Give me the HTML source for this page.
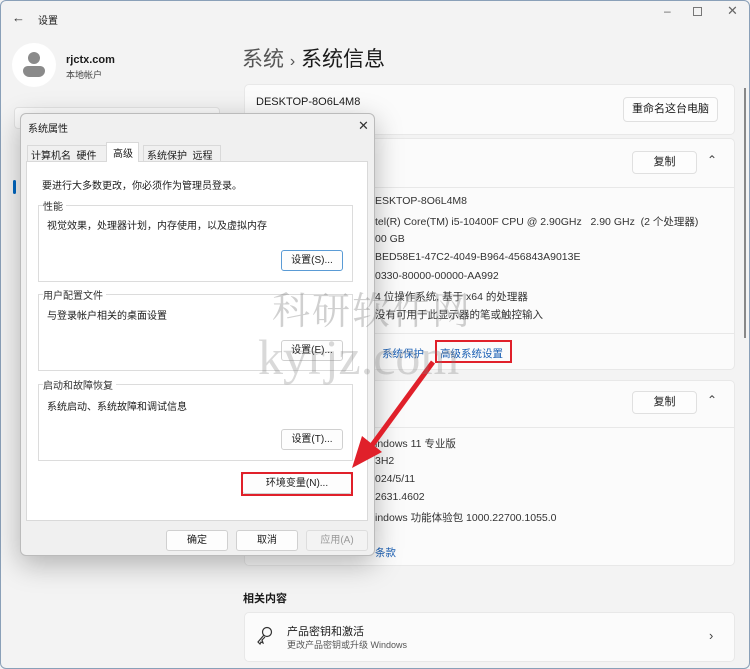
<!DOCTYPE html><html><head><meta charset="utf-8"><style>
*{margin:0;padding:0;box-sizing:border-box}
body{width:750px;height:669px;overflow:hidden;background:#f3f3f3;font-family:"Liberation Sans","Noto Sans CJK SC",sans-serif;color:#1b1b1b;position:relative;font-size:11px}
.a{position:absolute;white-space:nowrap}
.card{position:absolute;background:#fbfbfb;border:1px solid #e8e8e8;border-radius:5px}
.btn{position:absolute;background:#fdfdfd;border:1px solid #e0e0e0;border-radius:4px;text-align:center;font-size:11px}
.row{position:absolute;left:375px;font-size:10.5px;color:#333}
.dbtn{position:absolute;background:#fdfdfd;border:1px solid #d0d0d0;border-radius:3px;text-align:center;font-size:10px;line-height:19px}
.gb{position:absolute;border:1px solid #dcdcdc;left:38px;width:315px;height:77px}
.gl{position:absolute;background:#fff;font-size:10px;color:#333;padding-right:3px}
</style></head><body>
<div style="position:absolute;inset:0;border:1px solid #8aa0b8;border-radius:6px"></div>
<div class="a" style="left:12px;top:10px;font-size:13px;color:#333">←</div>
<div class="a" style="left:38px;top:12px;font-size:10px">设置</div>
<div class="a" style="left:664px;top:4px;font-size:12px;color:#666">–</div>
<div class="a" style="left:693px;top:7px;width:9px;height:9px;border:1px solid #777"></div>
<div class="a" style="left:727px;top:3px;font-size:13px;color:#666">✕</div>
<div class="a" style="left:12px;top:43px;width:44px;height:44px;border-radius:50%;background:#fff"></div>
<div class="a" style="left:28px;top:52px;width:12px;height:12px;border-radius:50%;background:#8a8a8a"></div>
<div class="a" style="left:23px;top:66px;width:22px;height:11px;border-radius:6px 6px 8px 8px;background:#8a8a8a"></div>
<div class="a" style="left:66px;top:54px;font-size:11px;font-weight:bold">rjctx.com</div>
<div class="a" style="left:66px;top:68px;font-size:9px;color:#444">本地帐户</div>
<div class="a" style="left:14px;top:107px;width:206px;height:22px;background:#fbfbfb;border:1px solid #e3e3e3;border-radius:4px"></div>
<div class="a" style="left:13px;top:180px;width:3px;height:14px;background:#0067c0;border-radius:2px"></div>
<div class="a" style="left:242px;top:43px;font-size:21px;color:#555">系统 <span style="font-size:16px">›</span> <span style="color:#1b1b1b">系统信息</span></div>
<div class="card" style="left:244px;top:84px;width:491px;height:51px"></div>
<div class="a" style="left:256px;top:96px;font-size:11px">DESKTOP-8O6L4M8</div>
<div class="btn" style="left:623px;top:97px;width:95px;height:25px;line-height:23px">重命名这台电脑</div>
<div class="card" style="left:244px;top:138px;width:491px;height:232px"></div>
<div class="a" style="left:244px;top:187px;width:491px;height:1px;background:#e8e8e8"></div>
<div class="btn" style="left:632px;top:151px;width:65px;height:23px;line-height:21px">复制</div>
<div class="a" style="left:707px;top:153px;font-size:12px;color:#444">⌃</div>
<div class="row" style="top:195px">ESKTOP-8O6L4M8</div>
<div class="row" style="top:214px">tel(R) Core(TM) i5-10400F CPU @ 2.90GHz &nbsp; 2.90 GHz &nbsp;(2 个处理器)</div>
<div class="row" style="top:233px">00 GB</div>
<div class="row" style="top:251px">BED58E1-47C2-4049-B964-456843A9013E</div>
<div class="row" style="top:270px">0330-80000-00000-AA992</div>
<div class="row" style="top:289px">4 位操作系统, 基于 x64 的处理器</div>
<div class="row" style="top:307px">没有可用于此显示器的笔或触控输入</div>
<div class="a" style="left:244px;top:333px;width:491px;height:1px;background:#e8e8e8"></div>
<div class="a" style="left:382px;top:346px;font-size:10.5px;color:#1a5fb4">系统保护</div>
<div class="a" style="left:440px;top:346px;font-size:10.5px;color:#1a5fb4">高级系统设置</div>
<div class="a" style="left:435px;top:340px;width:77px;height:23px;border:2px solid #e0202a"></div>
<div class="card" style="left:244px;top:380px;width:491px;height:186px"></div>
<div class="a" style="left:244px;top:427px;width:491px;height:1px;background:#e8e8e8"></div>
<div class="btn" style="left:632px;top:391px;width:65px;height:23px;line-height:21px">复制</div>
<div class="a" style="left:707px;top:393px;font-size:12px;color:#444">⌃</div>
<div class="row" style="top:436px">indows 11 专业版</div>
<div class="row" style="top:455px">3H2</div>
<div class="row" style="top:473px">024/5/11</div>
<div class="row" style="top:491px">2631.4602</div>
<div class="row" style="top:510px">indows 功能体验包 1000.22700.1055.0</div>
<div class="row" style="top:545px;color:#1a5fb4">条款</div>
<div class="a" style="left:243px;top:590px;font-size:11px;font-weight:bold">相关内容</div>
<div class="card" style="left:244px;top:612px;width:491px;height:50px"></div>
<svg class="a" style="left:256px;top:626px" width="18" height="20" viewBox="0 0 18 20"><circle cx="11" cy="6" r="4.5" fill="none" stroke="#333" stroke-width="1.2"/><path d="M8 9 L2 16 L4 18 L5 16 L7 17 L6 14 L9 11" fill="none" stroke="#333" stroke-width="1.2"/></svg>
<div class="a" style="left:287px;top:623px;font-size:11px">产品密钥和激活</div>
<div class="a" style="left:287px;top:638px;font-size:9px;color:#555">更改产品密钥或升级 Windows</div>
<div class="a" style="left:709px;top:628px;font-size:13px;color:#444">›</div>
<div class="a" style="left:744px;top:88px;width:2px;height:250px;background:#888"></div>
<!-- dialog -->
<div class="a" style="left:20px;top:113px;width:355px;height:443px;background:#f0f0f0;border:1px solid #bbb;border-radius:6px;box-shadow:0 8px 28px rgba(0,0,0,.28)"></div>
<div class="a" style="left:28px;top:120px;font-size:10px">系统属性</div>
<div class="a" style="left:358px;top:118px;font-size:13px;color:#333">✕</div>
<div class="a" style="left:26px;top:161px;width:342px;height:360px;background:#fff;border:1px solid #d9d9d9"></div>
<div class="a" style="left:27px;top:145px;width:80px;height:16px;border:1px solid #d9d9d9;border-bottom:none;background:#f0f0f0"></div>
<div class="a" style="left:31px;top:147px;font-size:10px">计算机名 &nbsp;硬件</div>
<div class="a" style="left:106px;top:142px;width:33px;height:20px;background:#fff;border:1px solid #d9d9d9;border-bottom:none"></div>
<div class="a" style="left:113px;top:145px;font-size:10px">高级</div>
<div class="a" style="left:143px;top:145px;width:78px;height:16px;border:1px solid #d9d9d9;border-bottom:none;background:#f0f0f0"></div>
<div class="a" style="left:147px;top:147px;font-size:10px">系统保护 &nbsp;远程</div>
<div class="a" style="left:42px;top:177px;font-size:10px">要进行大多数更改，你必须作为管理员登录。</div>
<div class="gb" style="top:205px"></div><div class="gl" style="left:43px;top:198px">性能</div>
<div class="a" style="left:47px;top:217px;font-size:10px">视觉效果，处理器计划，内存使用，以及虚拟内存</div>
<div class="dbtn" style="left:281px;top:250px;width:62px;height:21px;border-color:#5a9bd5">设置(S)...</div>
<div class="gb" style="top:294px"></div><div class="gl" style="left:43px;top:287px">用户配置文件</div>
<div class="a" style="left:47px;top:307px;font-size:10px">与登录帐户相关的桌面设置</div>
<div class="dbtn" style="left:281px;top:340px;width:62px;height:21px">设置(E)...</div>
<div class="gb" style="top:384px"></div><div class="gl" style="left:43px;top:377px">启动和故障恢复</div>
<div class="a" style="left:47px;top:398px;font-size:10px">系统启动、系统故障和调试信息</div>
<div class="dbtn" style="left:281px;top:429px;width:62px;height:21px">设置(T)...</div>
<div class="dbtn" style="left:242px;top:473px;width:110px;height:21px">环境变量(N)...</div>
<div class="a" style="left:241px;top:472px;width:112px;height:24px;border:2px solid #e0202a"></div>
<div class="dbtn" style="left:166px;top:530px;width:62px;height:21px">确定</div>
<div class="dbtn" style="left:236px;top:530px;width:62px;height:21px">取消</div>
<div class="dbtn" style="left:306px;top:530px;width:62px;height:21px;color:#999;background:#f3f3f3;border-color:#ddd">应用(A)</div>
<!-- arrow -->
<svg class="a" style="left:0;top:0" width="750" height="669"><line x1="433" y1="362" x2="370" y2="448" stroke="#e0202a" stroke-width="5"/><polygon points="352,468 362,436 382,452" fill="#e0202a"/></svg>
<!-- watermark -->
<div class="a" style="left:272px;top:280px;font-family:'Noto Serif CJK SC',serif;font-size:38px;color:rgba(120,120,120,.35);letter-spacing:2px">科研软件网</div>
<div class="a" style="left:258px;top:328px;font-family:'Liberation Serif',serif;font-size:50px;color:rgba(130,130,130,.3)">kyrjz.com</div>
</body></html>
